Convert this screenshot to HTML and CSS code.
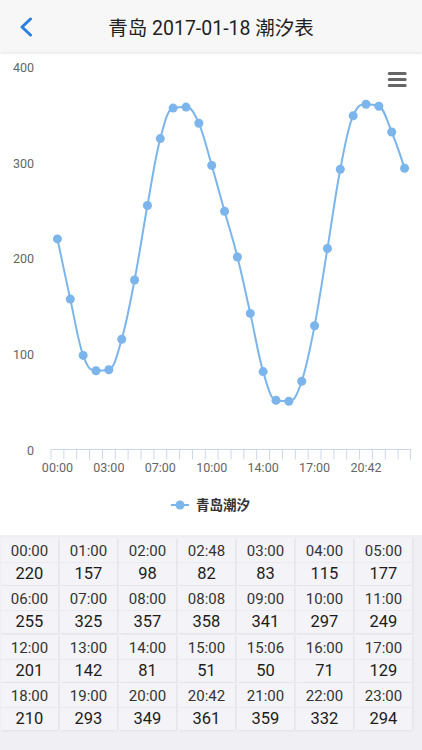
FILE: index.html
```html
<!DOCTYPE html>
<html lang="zh">
<head>
<meta charset="utf-8">
<title>青岛 2017-01-18 潮汐表</title>
<link rel="stylesheet" href="styles.css">
</head>
<body>
<div class="page">
  <header class="topbar">
    <svg class="back" width="14" height="20" viewBox="0 0 14 20"><path d="M11.5 2 L3 10 L11.5 18" fill="none" stroke="#2a7fe2" stroke-width="3" stroke-linecap="round" stroke-linejoin="round"/></svg>
    <h1 class="title">青岛 2017-01-18 潮汐表</h1>
  </header>

  <svg class="chart" width="422" height="483" viewBox="0 52 422 483">
    <g class="ylabels">
      <text x="34" y="72">400</text>
      <text x="34" y="167.5">300</text>
      <text x="34" y="263">200</text>
      <text x="34" y="358.5">100</text>
      <text x="34" y="454.5">0</text>
    </g>
    <path class="axis" d="M51 449.5 H411"/>
    <path class="axis" d="M51 449.5v10M63.86 449.5v10M76.71 449.5v10M89.57 449.5v10M102.43 449.5v10M115.29 449.5v10M128.14 449.5v10M141 449.5v10M153.86 449.5v10M166.71 449.5v10M179.57 449.5v10M192.43 449.5v10M205.29 449.5v10M218.14 449.5v10M231 449.5v10M243.86 449.5v10M256.71 449.5v10M269.57 449.5v10M282.43 449.5v10M295.29 449.5v10M308.14 449.5v10M321 449.5v10M333.86 449.5v10M346.71 449.5v10M359.57 449.5v10M372.43 449.5v10M385.29 449.5v10M398.14 449.5v10M410.5 449.5v10"/>
    <g class="xlabels">
      <text x="57.43" y="471.5">00:00</text>
      <text x="108.86" y="471.5">03:00</text>
      <text x="160.29" y="471.5">07:00</text>
      <text x="211.71" y="471.5">10:00</text>
      <text x="263.14" y="471.5">14:00</text>
      <text x="314.57" y="471.5">17:00</text>
      <text x="366" y="471.5">20:42</text>
    </g>
    <path class="series" d="M57.43 238.9 C57.43 238.9 65.15 275.8 70.29 299.1 C75.43 322.4 78 341.08 83.14 355.4 C88.28 369.72 90.86 370.7 96 370.7 C101.14 370.7 103.72 370.7 108.86 369.7 C114 368.7 116.57 357.14 121.71 339.2 C126.85 321.26 129.43 306.74 134.57 280 C139.71 253.26 142.29 233.78 147.43 205.5 C152.57 177.22 155.15 158.08 160.29 138.6 C165.43 119.12 168 109.1 173.14 108.1 C178.28 107.1 180.86 107.1 186 107.1 C191.14 107.1 193.72 111.64 198.86 123.3 C204 134.96 206.57 147.82 211.71 165.4 C216.85 182.98 219.43 192.88 224.57 211.2 C229.71 229.52 232.29 236.56 237.43 257 C242.57 277.44 245.15 290.48 250.29 313.4 C255.43 336.32 258 354.22 263.14 371.6 C268.28 388.98 270.86 399.3 276 400.3 C281.14 401.3 283.72 401.3 288.86 401.3 C294 401.3 296.57 396.3 301.71 381.2 C306.85 366.1 309.43 352.34 314.57 325.8 C319.71 299.26 322.29 279.82 327.43 248.5 C332.57 217.18 335.15 195.76 340.29 169.2 C345.43 142.64 348 127.2 353.14 115.7 C358.28 104.2 360.86 104.2 366 104.2 C371.14 104.2 373.72 104.2 378.86 106.2 C384 108.2 386.57 119.6 391.71 132 C396.85 144.4 404.57 168.2 404.57 168.2"/>
    <g class="markers">
      <circle cx="57.43" cy="238.9" r="4.5"/>
      <circle cx="70.29" cy="299.1" r="4.5"/>
      <circle cx="83.14" cy="355.4" r="4.5"/>
      <circle cx="96" cy="370.7" r="4.5"/>
      <circle cx="108.86" cy="369.7" r="4.5"/>
      <circle cx="121.71" cy="339.2" r="4.5"/>
      <circle cx="134.57" cy="280" r="4.5"/>
      <circle cx="147.43" cy="205.5" r="4.5"/>
      <circle cx="160.29" cy="138.6" r="4.5"/>
      <circle cx="173.14" cy="108.1" r="4.5"/>
      <circle cx="186" cy="107.1" r="4.5"/>
      <circle cx="198.86" cy="123.3" r="4.5"/>
      <circle cx="211.71" cy="165.4" r="4.5"/>
      <circle cx="224.57" cy="211.2" r="4.5"/>
      <circle cx="237.43" cy="257" r="4.5"/>
      <circle cx="250.29" cy="313.4" r="4.5"/>
      <circle cx="263.14" cy="371.6" r="4.5"/>
      <circle cx="276" cy="400.3" r="4.5"/>
      <circle cx="288.86" cy="401.3" r="4.5"/>
      <circle cx="301.71" cy="381.2" r="4.5"/>
      <circle cx="314.57" cy="325.8" r="4.5"/>
      <circle cx="327.43" cy="248.5" r="4.5"/>
      <circle cx="340.29" cy="169.2" r="4.5"/>
      <circle cx="353.14" cy="115.7" r="4.5"/>
      <circle cx="366" cy="104.2" r="4.5"/>
      <circle cx="378.86" cy="106.2" r="4.5"/>
      <circle cx="391.71" cy="132" r="4.5"/>
      <circle cx="404.57" cy="168.2" r="4.5"/>
    </g>
    <path class="menu" d="M389.2 73.5H405.2M389.2 79.5H405.2M389.2 85.5H405.2"/>
    <g class="legend">
      <path class="series" d="M171 505H189"/>
      <circle class="legend-dot" cx="180" cy="505" r="4.5"/>
      <text x="196" y="510">青岛潮汐</text>
    </g>
  </svg>

  <section class="table">
    <div class="cell"><div class="t">00:00</div><div class="v">220</div></div>
    <div class="cell"><div class="t">01:00</div><div class="v">157</div></div>
    <div class="cell"><div class="t">02:00</div><div class="v">98</div></div>
    <div class="cell"><div class="t">02:48</div><div class="v">82</div></div>
    <div class="cell"><div class="t">03:00</div><div class="v">83</div></div>
    <div class="cell"><div class="t">04:00</div><div class="v">115</div></div>
    <div class="cell"><div class="t">05:00</div><div class="v">177</div></div>
    <div class="cell"><div class="t">06:00</div><div class="v">255</div></div>
    <div class="cell"><div class="t">07:00</div><div class="v">325</div></div>
    <div class="cell"><div class="t">08:00</div><div class="v">357</div></div>
    <div class="cell"><div class="t">08:08</div><div class="v">358</div></div>
    <div class="cell"><div class="t">09:00</div><div class="v">341</div></div>
    <div class="cell"><div class="t">10:00</div><div class="v">297</div></div>
    <div class="cell"><div class="t">11:00</div><div class="v">249</div></div>
    <div class="cell"><div class="t">12:00</div><div class="v">201</div></div>
    <div class="cell"><div class="t">13:00</div><div class="v">142</div></div>
    <div class="cell"><div class="t">14:00</div><div class="v">81</div></div>
    <div class="cell"><div class="t">15:00</div><div class="v">51</div></div>
    <div class="cell"><div class="t">15:06</div><div class="v">50</div></div>
    <div class="cell"><div class="t">16:00</div><div class="v">71</div></div>
    <div class="cell"><div class="t">17:00</div><div class="v">129</div></div>
    <div class="cell"><div class="t">18:00</div><div class="v">210</div></div>
    <div class="cell"><div class="t">19:00</div><div class="v">293</div></div>
    <div class="cell"><div class="t">20:00</div><div class="v">349</div></div>
    <div class="cell"><div class="t">20:42</div><div class="v">361</div></div>
    <div class="cell"><div class="t">21:00</div><div class="v">359</div></div>
    <div class="cell"><div class="t">22:00</div><div class="v">332</div></div>
    <div class="cell"><div class="t">23:00</div><div class="v">294</div></div>
  </section>
</div>
</body>
</html>
```

FILE: styles.css
```css
html, body {
  margin: 0;
  padding: 0;
  background: #ffffff;
}

body {
  font-family: Roboto, "Noto Sans CJK SC", sans-serif;
  color: #222;
}

.page {
  width: 422px;
  height: 750px;
  display: flex;
  flex-direction: column;
  overflow: hidden;
}

.topbar {
  position: relative;
  height: 52px;
  flex: 0 0 52px;
  background: #f7f7f7;
  box-shadow: 0 1px 3px rgba(0, 0, 0, 0.12);
  display: flex;
  align-items: center;
  justify-content: center;
  z-index: 1;
}

.back {
  position: absolute;
  left: 19px;
  top: 17px;
}

.title {
  margin: 0;
  font-size: 19.5px;
  font-weight: 400;
  color: #1f1f1f;
  font-family: Roboto, "Noto Sans CJK SC", sans-serif;
  letter-spacing: 0;
}

.chart {
  display: block;
  flex: 0 0 483px;
  background: #fff;
}

.ylabels text {
  font-family: Roboto, sans-serif;
  font-size: 12.5px;
  fill: #666;
  text-anchor: end;
}

.xlabels text {
  font-family: Roboto, sans-serif;
  font-size: 12.5px;
  fill: #666;
  text-anchor: middle;
}

.axis {
  fill: none;
  stroke: #ccd6eb;
  stroke-width: 1;
}

.series {
  fill: none;
  stroke: #7cb5ec;
  stroke-width: 2;
}

.markers circle,
.legend-dot {
  fill: #7cb5ec;
}

.menu {
  fill: none;
  stroke: #666;
  stroke-width: 3;
  stroke-linecap: round;
}

.legend text {
  font-family: "Noto Sans CJK SC", sans-serif;
  font-size: 13.5px;
  font-weight: 700;
  fill: #333;
}

.table {
  flex: 1 1 auto;
  background: #f0eff4;
  display: grid;
  grid-template-columns: repeat(7, 57px);
  grid-auto-rows: 47px;
  column-gap: 2px;
  row-gap: 1.4px;
  padding: 3px 0 0 1px;
  align-content: start;
}

.cell {
  background: #f4f3f7;
  box-shadow: 1px 1px 2px rgba(0, 0, 0, 0.06);
  display: flex;
  flex-direction: column;
}

.t {
  height: 25px;
  padding-top: 1px;
  line-height: 24px;
  text-align: center;
  font-size: 15px;
  color: #333;
  border-bottom: 1px solid #ebeaef;
  box-sizing: border-box;
}

.v {
  height: 22px;
  line-height: 22px;
  text-align: center;
  font-size: 16.5px;
  color: #1c1c1c;
}
```
